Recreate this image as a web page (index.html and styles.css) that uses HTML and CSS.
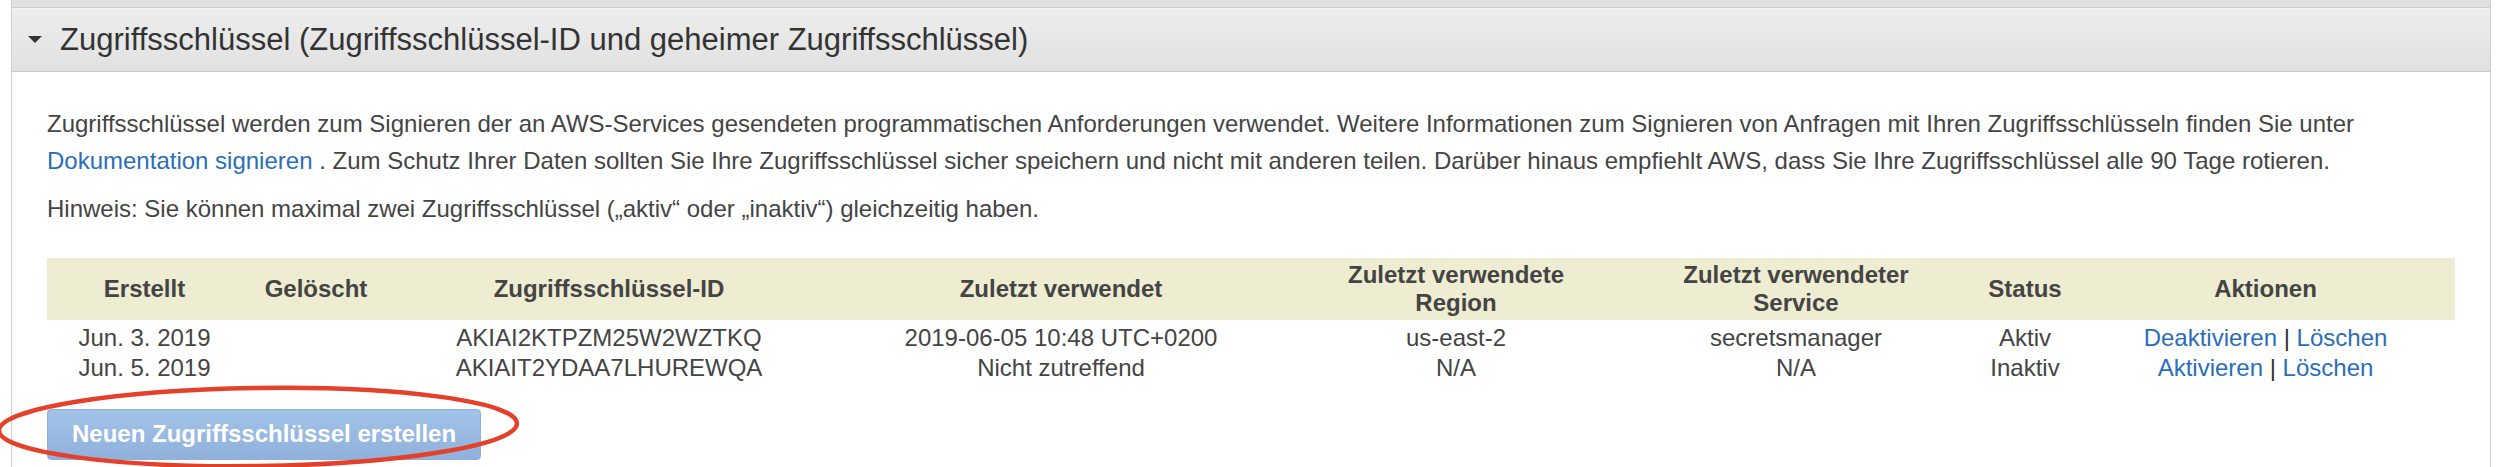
FILE: index.html
```html
<!DOCTYPE html>
<html lang="de">
<head>
<meta charset="utf-8">
<title>Zugriffsschlüssel</title>
<link rel="stylesheet" href="styles.css">
</head>
<body>
<div class="panel">
  <div class="prev"></div>
  <div class="head">
    <svg class="caret" width="14" height="8" viewBox="0 0 14 8"><polygon points="0,0 14,0 7,7" fill="#333"/></svg>
    <span class="title">Zugriffsschlüssel (Zugriffsschlüssel-ID und geheimer Zugriffsschlüssel)</span>
  </div>
  <div class="content">
    <p class="desc">Zugriffsschlüssel werden zum Signieren der an AWS-Services gesendeten programmatischen Anforderungen verwendet. Weitere Informationen zum Signieren von Anfragen mit Ihren Zugriffsschlüsseln finden Sie unter <a class="link" href="#">Dokumentation signieren</a> . Zum Schutz Ihrer Daten sollten Sie Ihre Zugriffsschlüssel sicher speichern und nicht mit anderen teilen. Darüber hinaus empfiehlt AWS, dass Sie Ihre Zugriffsschlüssel alle 90 Tage rotieren.</p>
    <p class="note">Hinweis: Sie können maximal zwei Zugriffsschlüssel („aktiv“ oder „inaktiv“) gleichzeitig haben.</p>
    <table class="keys">
      <colgroup>
        <col class="c1"><col class="c2"><col class="c3"><col class="c4"><col class="c5"><col class="c6"><col class="c7"><col class="c8">
      </colgroup>
      <thead>
        <tr>
          <th>Erstellt</th>
          <th>Gelöscht</th>
          <th>Zugriffsschlüssel-ID</th>
          <th>Zuletzt verwendet</th>
          <th>Zuletzt verwendete<br>Region</th>
          <th>Zuletzt verwendeter<br>Service</th>
          <th>Status</th>
          <th>Aktionen</th>
        </tr>
      </thead>
      <tbody>
        <tr>
          <td>Jun. 3. 2019</td>
          <td></td>
          <td>AKIAI2KTPZM25W2WZTKQ</td>
          <td>2019-06-05 10:48 UTC+0200</td>
          <td>us-east-2</td>
          <td>secretsmanager</td>
          <td>Aktiv</td>
          <td><a class="link" href="#">Deaktivieren</a> <span class="sep">|</span> <a class="link" href="#">Löschen</a></td>
        </tr>
        <tr>
          <td>Jun. 5. 2019</td>
          <td></td>
          <td>AKIAIT2YDAA7LHUREWQA</td>
          <td>Nicht zutreffend</td>
          <td>N/A</td>
          <td>N/A</td>
          <td>Inaktiv</td>
          <td><a class="link" href="#">Aktivieren</a> <span class="sep">|</span> <a class="link" href="#">Löschen</a></td>
        </tr>
      </tbody>
    </table>
    <div class="actions">
      <button class="create" type="button">Neuen Zugriffsschlüssel erstellen</button>
    </div>
  </div>
  <svg class="mark" width="540" height="100" viewBox="0 0 540 100">
    <ellipse cx="261" cy="45" rx="259" ry="39" fill="none" stroke="#e5402a" stroke-width="4.5" transform="rotate(-0.8 261 45)"/>
  </svg>
</div>
</body>
</html>
```
FILE: styles.css
```css
html, body {
  margin: 0;
  padding: 0;
  background: #fff;
  overflow: hidden;
}
body {
  font-family: "Liberation Sans", Arial, Helvetica, sans-serif;
  color: #444;
}
.panel {
  position: relative;
  margin-left: 11px;
  width: 2478px;
  border-left: 1px solid #d2d2d2;
  border-right: 1px solid #d2d2d2;
  height: 467px;
}
.prev {
  height: 7px;
  background: #e1e1e1;
  border-bottom: 1px solid #cdcdcd;
}
.head {
  display: flex;
  align-items: center;
  padding-left: 16px;
  background: linear-gradient(#ededed, #e1e1e1);
  border-top: 1px solid #f4f4f4;
  border-bottom: 1px solid #c9c9c9;
  box-sizing: border-box;
  height: 64px;
}
.caret {
  display: block;
  flex: none;
  margin-right: 18px;
}
.title {
  font-size: 31px;
  color: #333;
  white-space: nowrap;
}
.content {
  padding: 34px 35px 0 35px;
}
.desc, .note {
  margin: 0;
  font-size: 24px;
  line-height: 36.6px;
}
.note {
  margin-top: 12px;
}
.link {
  color: #2a6ebb;
  text-decoration: none;
}
.keys {
  margin-top: 30px;
  width: 100%;
  border-collapse: collapse;
  font-size: 24px;
  table-layout: fixed;
}
.c1 { width: 195px; }
.c2 { width: 148px; }
.c3 { width: 438px; }
.c4 { width: 466px; }
.c5 { width: 324px; }
.c6 { width: 356px; }
.c7 { width: 102px; }
.c8 { width: 379px; }
.keys th {
  background: #eeecd1;
  font-weight: bold;
  color: #444;
  line-height: 28px;
  padding: 3px 0;
  height: 56px;
  text-align: center;
  vertical-align: middle;
}
.keys td {
  text-align: center;
  line-height: 30px;
  padding: 0;
  white-space: nowrap;
}
.keys tbody tr:first-child td {
  padding-top: 3px;
}
.sep {
  color: #333;
}
.actions {
  margin-top: 26px;
}
.create {
  height: 51px;
  padding: 0 24px;
  border: 1px solid #8fb0d8;
  border-radius: 4px;
  background: linear-gradient(#a2c3e8, #8fb1db);
  color: #fff;
  font-family: "Liberation Sans", Arial, sans-serif;
  font-weight: bold;
  font-size: 24px;
}
.mark {
  position: absolute;
  left: -15px;
  top: 382px;
}
```
